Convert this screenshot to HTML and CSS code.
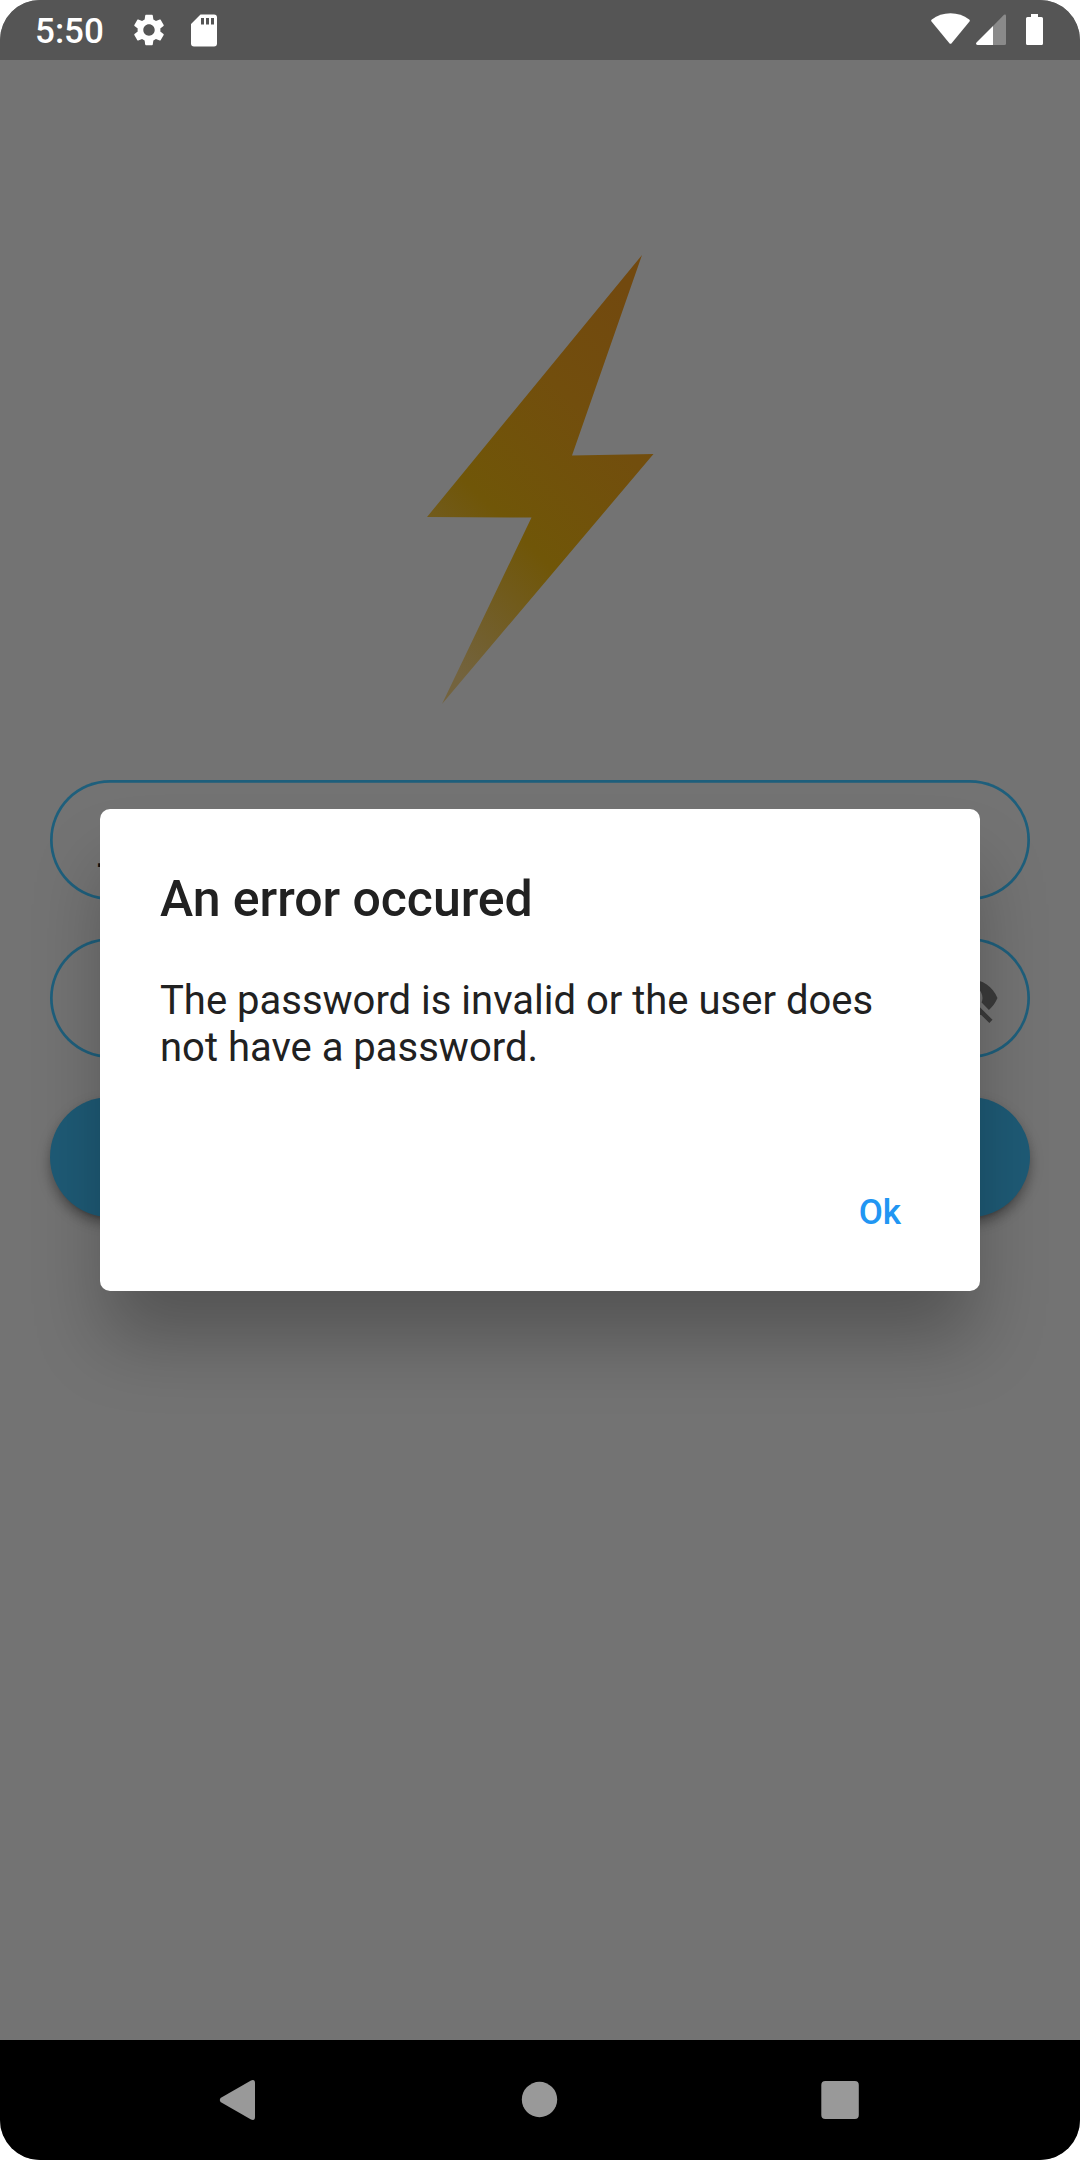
FILE: index.html
```html
<!DOCTYPE html>
<html lang="en">
<head>
<meta charset="utf-8">
<title>Sign in</title>
<link rel="stylesheet" href="styles.css">
</head>
<body>
<div class="screen">
  <header class="status-bar">
    <span class="clock">5:50</span>
    <svg class="gear" viewBox="0 0 24 24"><path fill="#fff" d="M19.14 12.94c.04-.3.06-.61.06-.94 0-.32-.02-.64-.07-.94l2.03-1.58c.18-.14.23-.41.12-.61l-1.92-3.32c-.12-.22-.37-.29-.59-.22l-2.39.96c-.5-.38-1.03-.7-1.62-.94l-.36-2.54c-.04-.24-.24-.41-.48-.41h-3.84c-.24 0-.43.17-.47.41l-.36 2.54c-.59.24-1.13.57-1.62.94l-2.39-.96c-.22-.08-.47 0-.59.22L2.74 8.87c-.12.21-.08.47.12.61l2.03 1.58c-.05.3-.09.63-.09.94s.02.64.07.94l-2.03 1.58c-.18.14-.23.41-.12.61l1.92 3.32c.12.22.37.29.59.22l2.39-.96c.5.38 1.03.7 1.62.94l.36 2.54c.05.24.24.41.48.41h3.84c.24 0 .44-.17.47-.41l.36-2.54c.59-.24 1.13-.56 1.62-.94l2.39.96c.22.08.47 0 .59-.22l1.92-3.32c.12-.22.07-.47-.12-.61l-2.01-1.58zM12 15.6c-1.98 0-3.600-1.620-3.600-3.600s1.620-3.600 3.600-3.600 3.600 1.620 3.600 3.600-1.620 3.600-3.600 3.600z"/></svg>
    <svg class="sd" viewBox="0 0 26 33"><path fill="#fff" fill-rule="evenodd" d="M9.500.5H23a3 3 0 0 1 3 3V29.500a3 3 0 0 1-3 3H3a3 3 0 0 1-3-3V10zM10 4v6.500h3V4zM15 4v6.500h3V4zM20 4v6.500h3V4z"/></svg>
    <div class="signals">
      <svg class="wifi" viewBox="0 0 39 32"><path fill="#fff" d="M.5 8.500Q-.3 7.500.8 6.600Q9 .2 19.500.2T38.200 6.600Q39.300 7.500 38.500 8.500L20.600 30.200Q19.500 31.500 18.400 30.200Z"/></svg>
      <svg class="cell" viewBox="0 0 30 31"><path fill="#8a8a8a" d="M17 12 28 .8Q30 0 30 2V29.500Q30 31 28.500 31H17Z"/><path fill="#fff" d="M17 12V31H1.500Q-.8 30.500.5 28.500Z"/></svg>
      <svg class="battery" viewBox="0 0 17 31"><path fill="#fff" d="M5 0h7v3h3.500q1.500 0 1.500 1.500v25q0 1.500-1.500 1.500h-14q-1.500 0-1.500-1.500v-25q0-1.500 1.500-1.500H5z"/></svg>
    </div>
  </header>
  <main class="login">
    <svg class="bolt" viewBox="0 0 228 450">
      <defs><linearGradient id="bolt-fill" gradientUnits="userSpaceOnUse" x1="12" y1="400" x2="290" y2="122">
        <stop offset="0" stop-color="#73633e"/><stop offset=".36" stop-color="#705608"/><stop offset=".7" stop-color="#724e0d"/><stop offset="1" stop-color="#72490f"/>
      </linearGradient></defs>
      <path fill="url(#bolt-fill)" d="M215 0 145 200.500 226.500 199 15 449 104.500 262.500 0 262Z"/>
    </svg>
    <form class="fields">
      <div class="field"><span class="typed">_</span></div>
      <div class="field field-password">
        <svg class="eye-off" viewBox="0 0 24 24"><path fill="#3b3b3b" d="M12 7c2.760 0 5 2.240 5 5 0 .65-.13 1.260-.36 1.830l2.920 2.920c1.510-1.260 2.700-2.890 3.430-4.750-1.730-4.390-6-7.500-11-7.500-1.400 0-2.740.25-3.980.7l2.160 2.160C10.740 7.130 11.350 7 12 7zM2 4.270l2.280 2.280.46.46C3.080 8.300 1.780 10.020 1 12c1.730 4.390 6 7.500 11 7.500 1.550 0 3.030-.3 4.380-.84l.42.42L19.730 22 21 20.730 3.270 3 2 4.270zM12 17c-2.760 0-5-2.240-5-5 0-.77.18-1.500.49-2.140l6.650 6.650c-.64.31-1.370.49-2.140.49z"/></svg>
      </div>
      <div class="submit"></div>
    </form>
  </main>
  <nav class="nav-bar">
    <svg viewBox="0 0 40 42"><path fill="#999" d="M1.500 19 32 1.500Q36 0 36 4V38Q36 42 32 40.500L1.500 23Q0 21 1.500 19Z"/></svg>
    <svg viewBox="0 0 40 42"><circle cx="19.500" cy="20.500" r="17.700" fill="#999"/></svg>
    <svg viewBox="0 0 40 42"><rect x="1.300" y="2" width="37.500" height="38" rx="4" fill="#999"/></svg>
  </nav>
  <section class="dialog" role="alertdialog">
    <h1 class="dialog-title">An error occured</h1>
    <p class="dialog-text">The password is invalid or the user does not have a password.</p>
    <div class="dialog-actions"><span class="ok">Ok</span></div>
  </section>
</div>
</body>
</html>
```
FILE: styles.css
```css
* { box-sizing: border-box; }
body { margin: 0; background: #fff; font-family: Roboto, sans-serif; }
svg { display: block; flex: none; }
.screen {
  position: relative;
  display: flex;
  flex-direction: column;
  width: 1080px;
  height: 2160px;
  overflow: hidden;
  border-radius: 40px;
  background: #737373;
}
.status-bar {
  display: flex;
  align-items: center;
  height: 60px;
  padding: 0 37px 0 35px;
  background: #555;
}
.clock { width: 95px; padding-top: 3px; color: #fff; font-size: 35px; font-weight: 500; line-height: 57px; }
.gear { width: 38px; height: 38px; }
.sd { width: 26px; height: 33px; margin-left: 23px; }
.signals { display: flex; align-items: flex-start; height: 34px; margin-left: auto; }
.wifi { width: 39px; height: 32px; }
.cell { width: 30px; height: 31px; margin: 1px 20px 0 6px; }
.battery { width: 17px; height: 31px; margin-top: 1px; }
.login { flex: 1; padding: 195px 50px 0; }
.bolt { width: 228px; height: 450px; margin: 0 auto 75px 377px; }
.fields { display: flex; flex-direction: column; gap: 37.500px; }
.field {
  display: flex;
  align-items: center;
  height: 120px;
  padding: 0 30px 0 48px;
  border-radius: 60px;
  box-shadow: inset 0 0 0 2.700px #1e5f7c;
}
.typed { margin-top: 18px; font-size: 40px; font-weight: 500; color: #111; }
.field-password { justify-content: flex-end; }
.eye-off { width: 60px; height: 60px; }
.submit {
  height: 120px;
  margin-top: 2px;
  border-radius: 60px;
  background: #1e5a75;
  box-shadow: 0 7.500px 2.500px -5px rgba(0, 0, 0, .12), 0 7px 10px rgba(0, 0, 0, .2), 0 6px 15px rgba(0, 0, 0, .16);
}
.nav-bar {
  display: flex;
  justify-content: space-between;
  height: 120px;
  padding: 39px 220px 0 219px;
  background: #000;
}
.nav-bar svg { width: 40px; height: 42px; }
.dialog {
  position: absolute;
  top: 808.500px;
  left: 100px;
  width: 880px;
  height: 482.500px;
  padding: 60px;
  border-radius: 10px;
  background: #fff;
  color: #212121;
  box-shadow: 0 54px 72px -7px rgba(0, 0, 0, .27);
}
.dialog-title { margin: 0; font-size: 50px; font-weight: 500; line-height: 60px; letter-spacing: -.05px; }
.dialog-text { margin: 48px 0 0; font-size: 40px; line-height: 47px; }
.dialog-actions { display: flex; justify-content: flex-end; margin-top: 112px; padding-right: 19px; }
.ok { color: #2196f3; font-size: 35px; font-weight: 500; line-height: 60px; }
```
